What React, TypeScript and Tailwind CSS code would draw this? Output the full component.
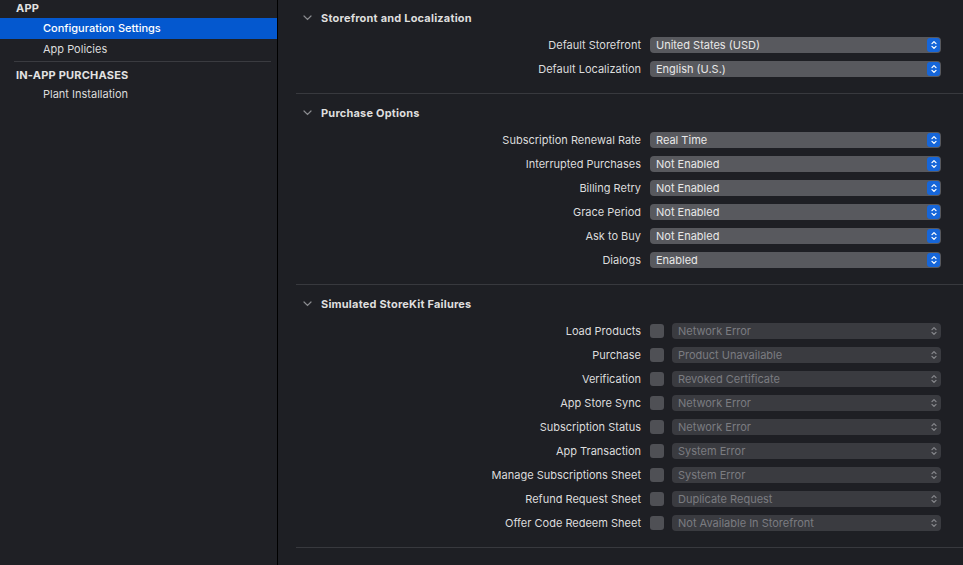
import React from 'react';

const font = { fontFamily: 'Inter, "Noto Sans", sans-serif' };

function Stepper({ enabled }: { enabled: boolean }) {
  return (
    <span
      className={`flex h-[14px] w-[13px] items-center justify-center rounded-[3px] ${
        enabled ? 'bg-[#1666d9]' : ''
      }`}
    >
      <svg width="8" height="12" viewBox="0 0 8 12" fill="none">
        <path
          d="M2 4.6 L4 2.6 L6 4.6 M2 7.4 L4 9.4 L6 7.4"
          stroke={enabled ? '#ffffff' : '#85868a'}
          strokeWidth="1.3"
          strokeLinecap="round"
          strokeLinejoin="round"
        />
      </svg>
    </span>
  );
}

function Select({ value, enabled = true }: { value: string; enabled?: boolean }) {
  return (
    <div
      className={`flex h-[16px] w-full items-center justify-between rounded-[4px] pl-[6px] pr-[1px] text-[11px] leading-none ${
        enabled ? 'bg-[#58595e] text-[#e8e8e8]' : 'bg-[#3a3b40] text-[#7b7c80]'
      }`}
    >
      <span>{value}</span>
      <Stepper enabled={enabled} />
    </div>
  );
}

function Row({ label, children }: { label: string; children: React.ReactNode }) {
  return (
    <div className="flex h-[24px] items-center">
      <div className="flex-1 pr-[9px] text-right text-[11px] text-[#dcdcdc]">{label}</div>
      <div className="mr-[22px] flex w-[291px] items-center">{children}</div>
    </div>
  );
}

function Section({ title, first, children }: { title: string; first?: boolean; children: React.ReactNode }) {
  return (
    <div>
      <div className={first ? 'pt-[11px]' : 'pt-[12px]'}>
        <div className="flex h-[14px] items-center pl-[25px]">
          <svg width="9" height="6" viewBox="0 0 9 6" fill="none" className="mr-[9px]">
            <path d="M1 1 L4.5 4.5 L8 1" stroke="#8b8c90" strokeWidth="1.2" strokeLinecap="round" />
          </svg>
          <span className="text-[11px] font-bold tracking-[0.2px] text-[#dedede]">{title}</span>
        </div>
        <div className="mt-[8px] pb-[12px]">{children}</div>
      </div>
      <div className="ml-[18px] h-px bg-[#38393e]" />
    </div>
  );
}

const purchase = [
  ['Subscription Renewal Rate', 'Real Time'],
  ['Interrupted Purchases', 'Not Enabled'],
  ['Billing Retry', 'Not Enabled'],
  ['Grace Period', 'Not Enabled'],
  ['Ask to Buy', 'Not Enabled'],
  ['Dialogs', 'Enabled'],
];

const failures = [
  ['Load Products', 'Network Error'],
  ['Purchase', 'Product Unavailable'],
  ['Verification', 'Revoked Certificate'],
  ['App Store Sync', 'Network Error'],
  ['Subscription Status', 'Network Error'],
  ['App Transaction', 'System Error'],
  ['Manage Subscriptions Sheet', 'System Error'],
  ['Refund Request Sheet', 'Duplicate Request'],
  ['Offer Code Redeem Sheet', 'Not Available In Storefront'],
];

export default function App() {
  return (
    <div className="flex h-screen w-full overflow-hidden bg-[#1e1f24]" style={font}>
      <aside className="w-[278px] shrink-0 border-r border-black bg-[#1f2025] text-[11px]">
        <div className="flex h-[18px] items-center pb-[2px] pl-[16px] font-bold tracking-[0.2px] text-[#e2e2e2]">APP</div>
        <div className="flex h-[21px] items-center bg-[#0458cf] pl-[43px] font-medium text-white">Configuration Settings</div>
        <div className="flex h-[21px] items-center pl-[43px] text-[#dcdcdc]">App Policies</div>
        <div className="ml-[14px] mr-[6px] mt-[1px] h-px bg-[#3a3b40]" />
        <div className="flex h-[22px] items-center pl-[16px] pt-[4px] font-bold tracking-[0.2px] text-[#e2e2e2]">IN-APP PURCHASES</div>
        <div className="flex h-[21px] items-center pl-[43px] text-[#dcdcdc]">Plant Installation</div>
      </aside>
      <main className="flex-1">
        <Section title="Storefront and Localization" first>
          <Row label="Default Storefront">
            <Select value="United States (USD)" />
          </Row>
          <Row label="Default Localization">
            <Select value="English (U.S.)" />
          </Row>
        </Section>
        <Section title="Purchase Options">
          {purchase.map(([label, value]) => (
            <Row key={label} label={label}>
              <Select value={value} />
            </Row>
          ))}
        </Section>
        <Section title="Simulated StoreKit Failures">
          {failures.map(([label, value]) => (
            <Row key={label} label={label}>
              <span className="mr-[8px] h-[14px] w-[14px] shrink-0 rounded-[3px] bg-[#4f5055]" />
              <Select value={value} enabled={false} />
            </Row>
          ))}
        </Section>
      </main>
    </div>
  );
}
